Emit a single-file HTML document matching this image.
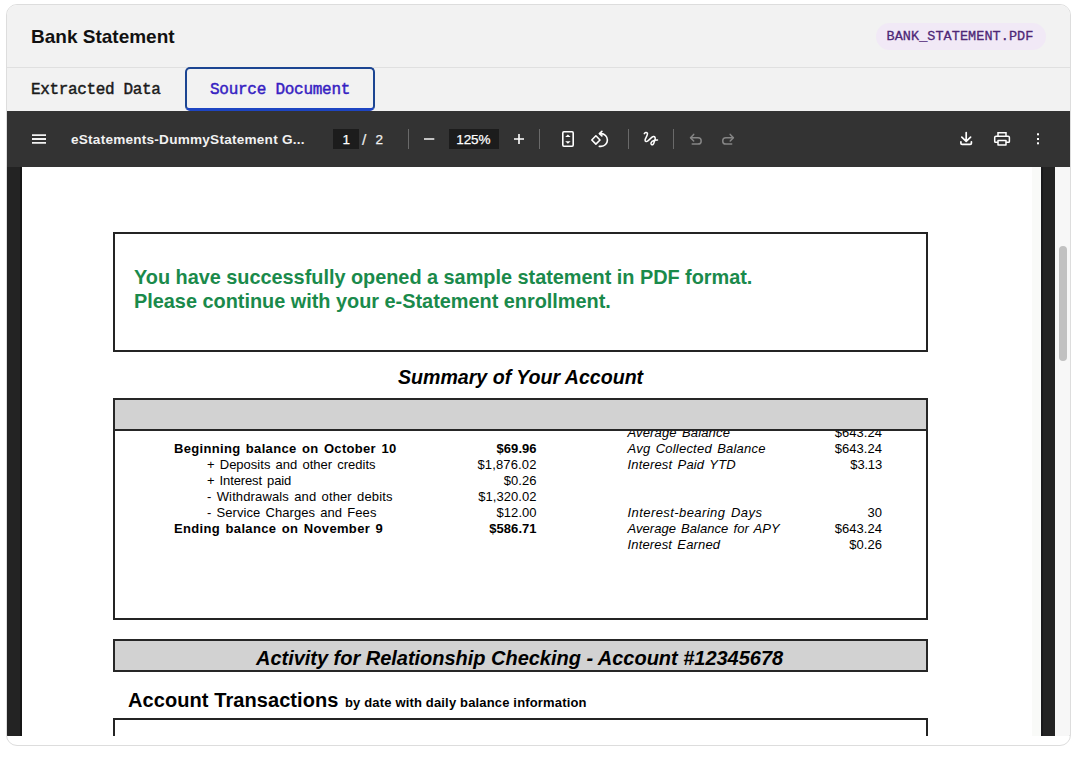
<!DOCTYPE html>
<html><head><meta charset="utf-8">
<style>
*{margin:0;padding:0;box-sizing:border-box}
html,body{width:1078px;height:766px;overflow:hidden;background:#fff;font-family:"Liberation Sans",sans-serif;position:relative}
.t{position:absolute;line-height:1;white-space:nowrap;z-index:2}
#card{position:absolute;left:6px;top:4px;width:1065px;height:742px;border:1px solid #dddddd;border-radius:11px;background:#fff;overflow:hidden;z-index:0}
#hdr{position:absolute;left:0;top:0;width:1063px;height:106px;background:#f2f2f2}
#hline{position:absolute;left:0;top:62px;width:1063px;height:1px;background:#e0e0e0}
.badge{position:absolute;left:876px;top:23px;width:170px;height:27px;border-radius:14px;background:#f1e9f6;z-index:1}
.tab2{position:absolute;left:185px;top:67px;width:190px;height:44px;border:2px solid #1c4592;border-bottom:3px solid #1e45c2;border-radius:5px;z-index:1}
#tb{position:absolute;left:0;top:106px;width:1063px;height:56px;background:#333333}
#view{position:absolute;left:0;top:162px;width:1063px;height:569px;background:#232323}
#page{position:absolute;left:15px;top:0;width:1019px;height:569px;background:#fff}
#track{position:absolute;left:1048px;top:0;width:15px;height:569px;background:#f7f7f7}
#thumb{position:absolute;left:4px;top:79px;width:8px;height:115px;border-radius:4px;background:#c1c1c1}
.sep{position:absolute;top:129px;width:1px;height:20px;background:#6a6a6a;z-index:2}
.inp{position:absolute;top:129px;height:20px;background:#1c1c1c;z-index:2}
.ico{position:absolute;z-index:2}
.pbox{position:absolute;border:2px solid #242424;z-index:1}
.greyhdr{position:absolute;left:113px;top:398px;width:815px;height:33px;background:#d2d2d2;border:2px solid #262626;z-index:3}
.actbar{position:absolute;left:112.5px;top:639px;width:815.5px;height:33px;background:#d2d2d2;border:2px solid #262626;z-index:1}
</style></head><body>
<div id="card">
  <div id="hdr"><div id="hline"></div></div>
  <div id="tb"></div>
  <div id="view">
    <div id="page"><div style="position:absolute;left:1010px;top:0;width:9px;height:569px;background:#f9faf8"></div></div><div style="position:absolute;left:13px;top:0;width:2px;height:569px;background:#161616"></div><div style="position:absolute;left:1034px;top:0;width:2px;height:569px;background:#19191b"></div>
    <div id="track"><div id="thumb"></div></div>
  </div>
</div>
<div id="clip" style="position:absolute;left:0;top:0;width:1078px;height:736px;overflow:hidden;z-index:1">
<div class="pbox" style="left:112.5px;top:232px;width:815.5px;height:119.5px"></div>
<div class="pbox" style="left:113px;top:398px;width:815px;height:222px"></div>
<div class="pbox" style="left:112.5px;top:718.4px;width:815.5px;height:40px"></div>
<div class="inp" style="left:333px;width:26px"></div>
<div class="inp" style="left:449px;width:50px"></div>
<div class="sep" style="left:408px"></div>
<div class="sep" style="left:539px"></div>
<div class="sep" style="left:628px"></div>
<div class="sep" style="left:673px"></div>
<svg class="ico" style="left:0;top:111px" width="1078" height="56" viewBox="0 111 1078 56" fill="none" stroke="#fff" stroke-width="1.6" stroke-linecap="round" stroke-linejoin="round">
  <path d="M32 135.1H46M32 139H46M32 142.9H46" stroke-linecap="butt" stroke-width="1.9" stroke="#f2f2f2"/>
  <path d="M424 139H434.3" stroke-width="1.5" stroke-linecap="butt" stroke="#f4f4f4"/>
  <path d="M514 139H524M519 134V144" stroke-width="1.6" stroke-linecap="butt"/>
  <rect x="562.8" y="131.8" width="10.4" height="14.4" rx="1.1" stroke-width="1.6"/>
  <path d="M565.2 137.1H570.6L567.9 134.6Z M565.2 141.2H570.6L567.9 143.7Z" fill="#fff" stroke="none"/>
  <path d="M595.9 135.8L600 140L595.9 144.1L591.8 140Z" stroke-width="1.6"/>
  <path d="M599.5 133.6H601A6.4 6.4 0 0 1 601 146.4H599.3" stroke-width="1.6"/>
  <path d="M601.9 131.3L599.5 133.6L601.9 135.9" stroke-width="1.6"/>
  <path d="M644.3 133.6C645 132.6 646.5 132 647.4 133.2C648.2 134.5 645.6 138 645.1 139.8C644.8 141.3 646.3 142 647.5 141.2C649.5 139.8 651.5 137 653.3 136.6C655 136.3 655.6 137.8 655 139.5C654.4 141.3 654 143.8 652.9 144.6C651.8 145.3 650.7 144.2 651 143C651.4 141.5 653 140.6 654.5 140.3C655.5 140.1 656.7 140.1 657.5 140.1" stroke-width="1.5"/>
  <g stroke="#858585" stroke-width="1.5">
    <path d="M693.7 134.4L690.5 137.7L693.7 141"/>
    <path d="M691 137.7H698A3.2 3.2 0 0 1 698 144.1H692.2"/>
    <path d="M730.2 134.4L733.4 137.7L730.2 141"/>
    <path d="M732.9 137.7H725.9A3.2 3.2 0 0 0 725.9 144.1H731.7"/>
  </g>
  <path d="M966.2 132.5V140.8M961.8 137.2L966.2 141.4L970.6 137.2" stroke-width="1.7"/>
  <path d="M960.9 141.8V143.2Q960.9 144.4 962.1 144.4H970.2Q971.4 144.4 971.4 143.2V141.8" stroke-width="1.7"/>
  <path d="M998 135.6V132.7H1006V135.6" stroke-width="1.5" stroke-linejoin="miter"/>
  <path d="M997.6 142.3H995.5Q994.7 142.3 994.7 141.5V137.6Q994.7 136.3 996 136.3H1008.1Q1009.4 136.3 1009.4 137.6V141.5Q1009.4 142.3 1008.6 142.3H1006.4" stroke-width="1.5"/>
  <rect x="998" y="140.6" width="8" height="4.3" stroke-width="1.5"/>
  <g fill="#fff" stroke="none">
    <rect x="1037" y="133.3" width="2" height="2"/><rect x="1037" y="138" width="2" height="2"/><rect x="1037" y="142.3" width="2" height="2"/>
  </g>
</svg>

<div class="t" style="left:31.00px;top:26.92px;font-family:'Liberation Sans',sans-serif;font-size:19px;font-weight:bold;font-style:normal;color:#111;letter-spacing:0.0px;word-spacing:0px;">Bank Statement</div>
<div class="badge"></div>
<div class="t" style="left:886.50px;top:29.85px;font-family:'Liberation Mono',monospace;font-size:13.5px;font-weight:normal;font-style:normal;color:#4e2776;letter-spacing:0.059px;word-spacing:0px;-webkit-text-stroke:0.3px #4e2776;">BANK_STATEMENT.PDF</div>
<div class="t" style="left:31.00px;top:81.64px;font-family:'Liberation Mono',monospace;font-size:16px;font-weight:normal;font-style:normal;color:#1a1a1a;letter-spacing:-0.358px;word-spacing:0px;-webkit-text-stroke:0.45px #1a1a1a;">Extracted Data</div>
<div class="tab2"></div>
<div class="t" style="left:210.00px;top:81.64px;font-family:'Liberation Mono',monospace;font-size:16px;font-weight:normal;font-style:normal;color:#3621c2;letter-spacing:-0.259px;word-spacing:0px;-webkit-text-stroke:0.45px #3621c2;">Source Document</div>
<div class="t" style="left:71.00px;top:133.09px;font-family:'Liberation Sans',sans-serif;font-size:13.6px;font-weight:bold;font-style:normal;color:#f1f1f1;letter-spacing:0.229px;word-spacing:0px;">eStatements-DummyStatement G...</div>
<div class="t" style="left:342.50px;top:132.77px;font-family:'Liberation Sans',sans-serif;font-size:13.5px;font-weight:normal;font-style:normal;color:#fff;letter-spacing:0px;word-spacing:0px;z-index:3;-webkit-text-stroke:0.25px #fff;">1</div>
<div class="t" style="left:362.00px;top:132.48px;font-family:'Liberation Sans',sans-serif;font-size:15.5px;font-weight:normal;font-style:normal;color:#eee;letter-spacing:0px;word-spacing:0px;-webkit-text-stroke:0.2px #eee;">/</div>
<div class="t" style="left:375.50px;top:132.77px;font-family:'Liberation Sans',sans-serif;font-size:13.5px;font-weight:normal;font-style:normal;color:#f2f2f2;letter-spacing:0px;word-spacing:0px;-webkit-text-stroke:0.25px #f2f2f2;">2</div>
<div class="t" style="left:456.30px;top:132.77px;font-family:'Liberation Sans',sans-serif;font-size:13.5px;font-weight:normal;font-style:normal;color:#fff;letter-spacing:-0.1px;word-spacing:0px;z-index:3;-webkit-text-stroke:0.25px #fff;">125%</div>
<div class="t" style="left:134.00px;top:267.75px;font-family:'Liberation Sans',sans-serif;font-size:19.9px;font-weight:bold;font-style:normal;color:#1a8a4b;letter-spacing:-0.022px;word-spacing:0px;">You have successfully opened a sample statement in PDF format.</div>
<div class="t" style="left:134.00px;top:291.75px;font-family:'Liberation Sans',sans-serif;font-size:19.9px;font-weight:bold;font-style:normal;color:#1a8a4b;letter-spacing:-0.013px;word-spacing:0px;">Please continue with your e-Statement enrollment.</div>
<div class="t" style="left:398.00px;top:368.01px;font-family:'Liberation Sans',sans-serif;font-size:19.6px;font-weight:bold;font-style:italic;color:#000;letter-spacing:-0.009px;word-spacing:0px;">Summary of Your Account</div>
<div class="t" style="left:174.00px;top:442.30px;font-family:'Liberation Sans',sans-serif;font-size:13px;font-weight:bold;font-style:normal;color:#000;letter-spacing:0.32px;word-spacing:1.5px;">Beginning balance on October 10</div>
<div class="t" style="left:207.00px;top:458.30px;font-family:'Liberation Sans',sans-serif;font-size:13px;font-weight:normal;font-style:normal;color:#000;letter-spacing:0.013px;word-spacing:1.5px;">+ Deposits and other credits</div>
<div class="t" style="left:207.00px;top:474.30px;font-family:'Liberation Sans',sans-serif;font-size:13px;font-weight:normal;font-style:normal;color:#000;letter-spacing:-0.104px;word-spacing:1.5px;">+ Interest paid</div>
<div class="t" style="left:207.00px;top:490.30px;font-family:'Liberation Sans',sans-serif;font-size:13px;font-weight:normal;font-style:normal;color:#000;letter-spacing:0.132px;word-spacing:1.5px;">- Withdrawals and other debits</div>
<div class="t" style="left:207.00px;top:506.30px;font-family:'Liberation Sans',sans-serif;font-size:13px;font-weight:normal;font-style:normal;color:#000;letter-spacing:0.062px;word-spacing:1.5px;">- Service Charges and Fees</div>
<div class="t" style="left:174.00px;top:522.30px;font-family:'Liberation Sans',sans-serif;font-size:13px;font-weight:bold;font-style:normal;color:#000;letter-spacing:0.34px;word-spacing:1.5px;">Ending balance on November 9</div>
<div class="t" style="right:541.40px;text-align:right;top:442.30px;font-family:'Liberation Sans',sans-serif;font-size:13px;font-weight:bold;font-style:normal;color:#000;letter-spacing:0.05px;word-spacing:0px;">$69.96</div>
<div class="t" style="right:541.40px;text-align:right;top:458.30px;font-family:'Liberation Sans',sans-serif;font-size:13px;font-weight:normal;font-style:normal;color:#000;letter-spacing:0.15px;word-spacing:0px;">$1,876.02</div>
<div class="t" style="right:541.40px;text-align:right;top:474.30px;font-family:'Liberation Sans',sans-serif;font-size:13px;font-weight:normal;font-style:normal;color:#000;letter-spacing:0.05px;word-spacing:0px;">$0.26</div>
<div class="t" style="right:541.40px;text-align:right;top:490.30px;font-family:'Liberation Sans',sans-serif;font-size:13px;font-weight:normal;font-style:normal;color:#000;letter-spacing:0.05px;word-spacing:0px;">$1,320.02</div>
<div class="t" style="right:541.40px;text-align:right;top:506.30px;font-family:'Liberation Sans',sans-serif;font-size:13px;font-weight:normal;font-style:normal;color:#000;letter-spacing:0.05px;word-spacing:0px;">$12.00</div>
<div class="t" style="right:541.40px;text-align:right;top:522.30px;font-family:'Liberation Sans',sans-serif;font-size:13px;font-weight:bold;font-style:normal;color:#000;letter-spacing:0.05px;word-spacing:0px;">$586.71</div>
<div class="t" style="left:627.50px;top:426.30px;font-family:'Liberation Sans',sans-serif;font-size:13px;font-weight:normal;font-style:italic;color:#000;letter-spacing:0.15px;word-spacing:1.5px;">Average Balance</div>
<div class="t" style="right:196.00px;text-align:right;top:426.30px;font-family:'Liberation Sans',sans-serif;font-size:13px;font-weight:normal;font-style:normal;color:#000;letter-spacing:0.05px;word-spacing:0px;">$643.24</div>
<div class="t" style="left:627.50px;top:442.30px;font-family:'Liberation Sans',sans-serif;font-size:13px;font-weight:normal;font-style:italic;color:#000;letter-spacing:0.22px;word-spacing:1.5px;">Avg Collected Balance</div>
<div class="t" style="right:196.00px;text-align:right;top:442.30px;font-family:'Liberation Sans',sans-serif;font-size:13px;font-weight:normal;font-style:normal;color:#000;letter-spacing:0.05px;word-spacing:0px;">$643.24</div>
<div class="t" style="left:627.50px;top:458.30px;font-family:'Liberation Sans',sans-serif;font-size:13px;font-weight:normal;font-style:italic;color:#000;letter-spacing:0.174px;word-spacing:1.5px;">Interest Paid YTD</div>
<div class="t" style="right:196.00px;text-align:right;top:458.30px;font-family:'Liberation Sans',sans-serif;font-size:13px;font-weight:normal;font-style:normal;color:#000;letter-spacing:-0.175px;word-spacing:0px;">$3.13</div>
<div class="t" style="left:627.50px;top:506.30px;font-family:'Liberation Sans',sans-serif;font-size:13px;font-weight:normal;font-style:italic;color:#000;letter-spacing:0.43px;word-spacing:1.5px;">Interest-bearing Days</div>
<div class="t" style="right:196.00px;text-align:right;top:506.30px;font-family:'Liberation Sans',sans-serif;font-size:13px;font-weight:normal;font-style:normal;color:#000;letter-spacing:0.05px;word-spacing:0px;">30</div>
<div class="t" style="left:627.50px;top:522.30px;font-family:'Liberation Sans',sans-serif;font-size:13px;font-weight:normal;font-style:italic;color:#000;letter-spacing:0.041px;word-spacing:1.5px;">Average Balance for APY</div>
<div class="t" style="right:196.00px;text-align:right;top:522.30px;font-family:'Liberation Sans',sans-serif;font-size:13px;font-weight:normal;font-style:normal;color:#000;letter-spacing:0.05px;word-spacing:0px;">$643.24</div>
<div class="t" style="left:627.50px;top:538.30px;font-family:'Liberation Sans',sans-serif;font-size:13px;font-weight:normal;font-style:italic;color:#000;letter-spacing:0.15px;word-spacing:1.5px;">Interest Earned</div>
<div class="t" style="right:196.00px;text-align:right;top:538.30px;font-family:'Liberation Sans',sans-serif;font-size:13px;font-weight:normal;font-style:normal;color:#000;letter-spacing:0.05px;word-spacing:0px;">$0.26</div>
<div class="greyhdr"></div>
<div class="actbar"></div>
<div class="t" style="left:256.00px;top:647.97px;font-family:'Liberation Sans',sans-serif;font-size:20px;font-weight:bold;font-style:italic;color:#000;letter-spacing:-0.022px;word-spacing:0px;">Activity for Relationship Checking - Account #12345678</div>
<div class="t" style="left:128.00px;top:690.47px;font-family:'Liberation Sans',sans-serif;font-size:20px;font-weight:bold;font-style:normal;color:#000;letter-spacing:0.08px;word-spacing:0px;">Account Transactions</div>
<div class="t" style="left:345.00px;top:696.40px;font-family:'Liberation Sans',sans-serif;font-size:13px;font-weight:bold;font-style:normal;color:#000;letter-spacing:0.162px;word-spacing:0px;">by date with daily balance information</div>

</div>
</body></html>
